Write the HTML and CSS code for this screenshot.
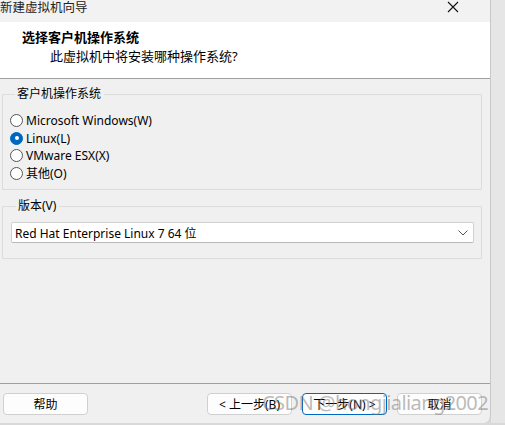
FILE: index.html
```html
<!doctype html>
<html lang="zh-CN">
  <head>
    <meta charset="UTF-8" />
    <title>新建虚拟机向导</title>
    <link rel="stylesheet" href="styles.css">
  </head>
  <body>
    <div class="screen">
      <div class="dialog">
        <div class="titlebar">
          <span class="title">新建虚拟机向导</span>
          <span class="close">
            <svg width="12" height="12" viewBox="0 0 12 12">
              <path d="M1 1 L11 11 M11 1 L1 11" stroke="#111" stroke-width="1.1" fill="none" />
            </svg>
          </span>
        </div>
        <div class="header">
          <div class="header-title">选择客户机操作系统</div>
          <div class="header-sub">此虚拟机中将安装哪种操作系统?</div>
        </div>
        <div class="content">
          <fieldset class="group os-group">
            <legend>客户机操作系统</legend>
            <label class="radio"><span class="dot"></span>Microsoft Windows(W)</label>
            <label class="radio"><span class="dot checked"></span>Linux(L)</label>
            <label class="radio"><span class="dot"></span>VMware ESX(X)</label>
            <label class="radio"><span class="dot"></span>其他(O)</label>
          </fieldset>
          <fieldset class="group version-group">
            <legend>版本(V)</legend>
            <div class="select">
              <span>Red Hat Enterprise Linux 7 64 位</span>
              <svg width="10" height="6" viewBox="0 0 10 6">
                <path d="M0.5 0.5 L5 5 L9.5 0.5" stroke="#555" stroke-width="1" fill="none" />
              </svg>
            </div>
          </fieldset>
        </div>
        <div class="footer">
          <button class="btn">帮助</button>
          <div class="nav">
            <button class="btn">&lt; 上一步(B)</button>
            <button class="btn focus">下一步(N) &gt;</button>
            <button class="btn">取消</button>
          </div>
          <div class="watermark">CSDN @hongjialiang2002</div>
        </div>
      </div>
      <div class="edge"></div>
    </div>
  </body>
</html>
```

FILE: styles.css
```css
body {
  margin: 0;
  background-color: #d9d9d9;
  font-family: "Noto Sans", "Noto Sans CJK SC", sans-serif;
  font-size: 12px;
  color: #000;
}

.screen {
  display: flex;
  width: 505px;
  height: 425px;
  overflow: hidden;
}

.dialog {
  width: 491px;
  height: 423px;
  background-color: #f0f0f0;
  display: flex;
  flex-direction: column;
  border-bottom-right-radius: 7px;
  border-right: 1px solid #c8c8c8;
  box-sizing: border-box;
}

.edge {
  flex: 1;
  height: 423px;
  background-color: #e6e6e6;
}

.titlebar {
  height: 22px;
  display: flex;
  justify-content: space-between;
  align-items: flex-start;
  background-color: #f2f2f2;
}

.title {
  margin-top: -3px;
  font-size: 12.5px;
  color: #222;
}

.close {
  margin: 0 31px 0 0;
}

.header {
  height: 56px;
  background-color: #fff;
  border-bottom: 1px solid #a0a0a0;
}

.header-title {
  font-weight: bold;
  font-size: 13px;
  margin: 7px 0 0 22px;
  line-height: 16px;
}

.header-sub {
  font-size: 13px;
  margin: 3px 0 0 50px;
  line-height: 16px;
}

.content {
  flex: 1;
  padding: 8px 8px 0 2px;
}

.group {
  margin: 0;
  border: 1px solid #dcdcdc;
  border-radius: 1px;
  padding: 0;
}

.group legend {
  margin-left: 5px;
  padding: 0 3px 0 2px;
  line-height: 14px;
}

.os-group {
  height: 103px;
  box-sizing: border-box;
  padding: 11px 0 0 7px;
}

.radio {
  display: flex;
  align-items: center;
  height: 17.5px;
}

.dot {
  width: 11px;
  height: 11px;
  border: 1px solid #555;
  border-radius: 50%;
  margin-right: 3px;
  background-color: #fff;
}

.dot.checked {
  border-color: #0067c0;
  background-color: #0067c0;
  position: relative;
}

.dot.checked::after {
  content: "";
  position: absolute;
  left: 3.5px;
  top: 3.5px;
  width: 4px;
  height: 4px;
  border-radius: 50%;
  background-color: #fff;
}

.version-group {
  margin-top: 9px;
  height: 60px;
  box-sizing: border-box;
  padding: 9px 0 0 8px;
}

.select {
  width: 463px;
  height: 21px;
  box-sizing: border-box;
  background-color: #fff;
  border: 1px solid #d0d0d0;
  border-bottom-color: #b8b8b8;
  border-radius: 2px;
  display: flex;
  justify-content: space-between;
  align-items: center;
  padding: 0 5px 0 3px;
}

.footer {
  position: relative;
  height: 40px;
  border-top: 1px solid #a0a0a0;
  display: flex;
  justify-content: space-between;
  padding: 9px 8px 0 3px;
  box-sizing: border-box;
}

.nav {
  display: flex;
  gap: 10px;
}

.btn {
  width: 85px;
  height: 22px;
  font-family: inherit;
  font-size: 12px;
  background-color: #fdfdfd;
  border: 1px solid #d0d0d0;
  border-radius: 4px;
  padding: 0;
  color: #000;
}

.btn.focus {
  border: 1px solid #0067c0;
}

.watermark {
  position: absolute;
  left: 262px;
  top: 7px;
  font-size: 20px;
  line-height: 24px;
  color: rgba(120, 120, 120, 0.5);
  white-space: nowrap;
  letter-spacing: -0.6px;
}
```
